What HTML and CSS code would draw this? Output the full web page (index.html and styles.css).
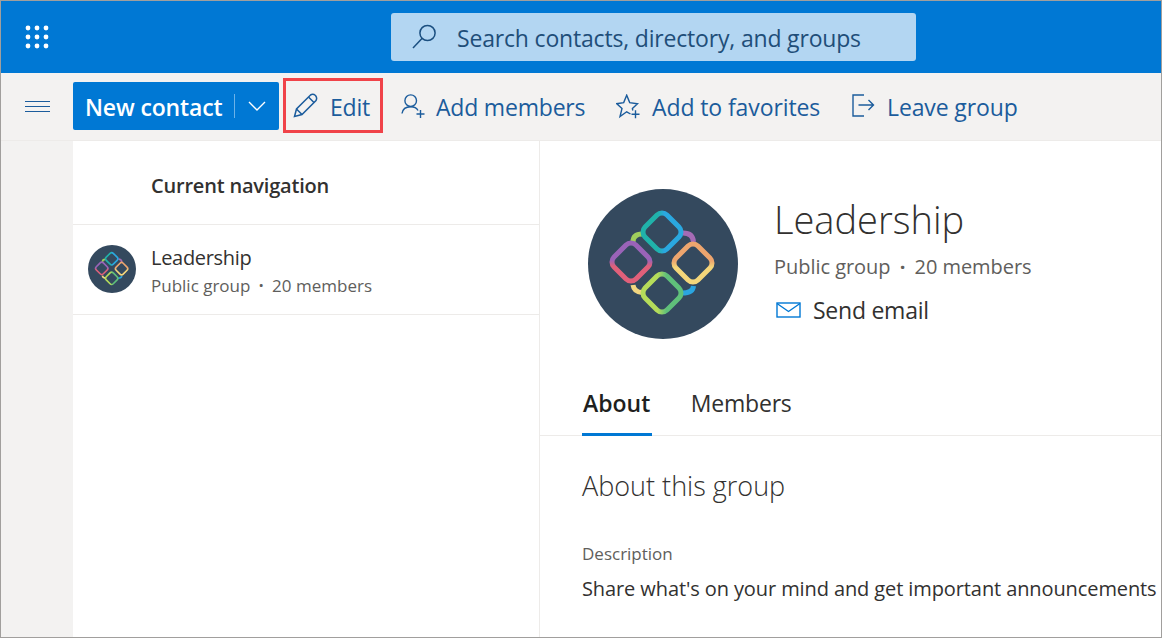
FILE: index.html
```html
<!DOCTYPE html>
<html>
<head>
  <meta charset="UTF-8"/>
  <title>Leadership - Contacts</title>
  <link rel="stylesheet" href="styles.css">
</head>
<body>
<div class="app">
  <header class="topbar">
    <div class="waffle">
      <svg width="24" height="24" viewBox="0 0 24 24" fill="#fff">
        <circle cx="3" cy="3" r="2.4"/><circle cx="12" cy="3" r="2.4"/><circle cx="21" cy="3" r="2.4"/>
        <circle cx="3" cy="12" r="2.4"/><circle cx="12" cy="12" r="2.4"/><circle cx="21" cy="12" r="2.4"/>
        <circle cx="3" cy="21" r="2.4"/><circle cx="12" cy="21" r="2.4"/><circle cx="21" cy="21" r="2.4"/>
      </svg>
    </div>
    <div class="search">
      <svg class="search-icon" width="26" height="26" viewBox="0 0 26 26" fill="none" stroke="#1b4f80" stroke-width="1.5">
        <circle cx="15.5" cy="9" r="7.6"/><path d="M10.2 14.3 L1 24"/>
      </svg>
      <span>Search contacts, directory, and groups</span>
    </div>
  </header>

  <div class="toolbar">
    <div class="hamburger"><i></i><i></i><i></i></div>
    <div class="new-btn">
      <span class="new-label">New contact</span>
      <span class="new-sep"></span>
      <svg width="18" height="10" viewBox="0 0 18 10" fill="none" stroke="#fff" stroke-width="1.4"><path d="M1 1 L9 9 L17 1"/></svg>
    </div>
    <div class="tool tool-edit">
      <svg width="25" height="25" viewBox="0 0 25 25" fill="none" stroke="#1b5c9c" stroke-width="1.5">
        <path d="M1.5 23.5 L3.5 16 L17.5 2 Q20 0.5 22.5 2.5 Q24.5 5 23 7.5 L9 21.5 Z"/><path d="M15.5 4 L21 9.5"/><path d="M3.5 16 L9 21.5"/>
      </svg>
      <span>Edit</span>
    </div>
    <div class="tool tool-members">
      <svg width="25" height="25" viewBox="0 0 25 25" fill="none" stroke="#1b5c9c" stroke-width="1.4">
        <circle cx="9.7" cy="6.7" r="5.8"/><path d="M1 19.5 Q2 12.8 9.7 12.8 Q15 12.8 17 16.5"/><path d="M15.5 20 H23.5 M19.5 16 V24"/>
      </svg>
      <span>Add members</span>
    </div>
    <div class="tool tool-fav">
      <svg width="25" height="25" viewBox="0 0 25 25" fill="none" stroke="#1b5c9c" stroke-width="1.4">
        <path d="M16.8 16.5 L16.4 14.5 L21.5 9.7 L13.7 8.6 L10.7 1.2 L7.7 8.6 L0.8 9.7 L6 14.5 L4 22.5 L10.7 17.8 L14.5 20"/><path d="M15.5 20.3 H23.5 M19.5 16.3 V24.3"/>
      </svg>
      <span>Add to favorites</span>
    </div>
    <div class="tool tool-leave">
      <svg width="25" height="25" viewBox="0 0 25 25" fill="none" stroke="#1b5c9c" stroke-width="1.4">
        <path d="M13 1 H2 V22 H13"/><path d="M7.5 11 H22.5 M17.5 6 L22.5 11 L17.5 16"/>
      </svg>
      <span>Leave group</span>
    </div>
  </div>

  <div class="content">
    <div class="rail"></div>
    <nav class="nav">
      <div class="nav-head">Current navigation</div>
      <div class="nav-item">
        <svg class="logo" width="48" height="48"><use href="#group-logo"/></svg>
        <div class="nav-text">
          <div class="nav-name">Leadership</div>
          <div class="nav-sub">Public group <b>·</b> 20 members</div>
        </div>
      </div>
    </nav>
    <main class="main">
      <section class="profile">
        <svg class="logo" width="150" height="150"><use href="#group-logo"/></svg>
        <div class="profile-info">
          <h1>Leadership</h1>
          <div class="profile-sub">Public group <b>·</b> 20 members</div>
          <div class="send">
            <svg width="25" height="16" viewBox="0 0 25 16" fill="none" stroke="#0078d4" stroke-width="1.4">
              <rect x="1" y="1" width="23" height="14"/><path d="M1 1.5 L12.5 9.5 L24 1.5"/>
            </svg>
            <span>Send email</span>
          </div>
        </div>
      </section>
      <div class="tabs">
        <div class="tab tab-on">About</div>
        <div class="tab">Members</div>
      </div>
      <section class="about">
        <h2>About this group</h2>
        <div class="desc-label">Description</div>
        <div class="desc">Share what's on your mind and get important announcements</div>
      </section>
    </main>
  </div>
</div>

<svg class="defs" width="0" height="0">
  <defs>
    <linearGradient id="ring-top" x1="1" y1="0" x2="0" y2="1">
      <stop offset="0.45" stop-color="#2aa8e0"/><stop offset="0.6" stop-color="#20b2aa"/>
    </linearGradient>
    <linearGradient id="ring-left" x1="0" y1="0" x2="1" y2="1">
      <stop offset="0.45" stop-color="#9a63b8"/><stop offset="0.6" stop-color="#e0607a"/>
    </linearGradient>
    <linearGradient id="ring-right" x1="0" y1="0" x2="1" y2="1">
      <stop offset="0.45" stop-color="#eda56e"/><stop offset="0.6" stop-color="#f4d67a"/>
    </linearGradient>
    <linearGradient id="ring-bottom" x1="1" y1="0" x2="0" y2="1">
      <stop offset="0.4" stop-color="#5fc07a"/><stop offset="0.6" stop-color="#b5dc5a"/>
    </linearGradient>
  </defs>
  <symbol id="group-logo" viewBox="0 0 150 150">
    <circle cx="75" cy="75" r="75" fill="#34495e"/>
    <g fill="none" stroke-width="5">
      <path d="M45 53 Q45 45 54 45" stroke="#9fce5c"/>
      <path d="M95 44 Q105 44 105.5 53" stroke="#a56bb5"/>
      <path d="M105.5 97 Q105 104 94 104" stroke="#2aa5e0"/>
      <path d="M45 96 Q46 103 54 103.5" stroke="#f2d680"/>
      <rect x="-15.5" y="-15.5" width="31" height="31" rx="7" transform="translate(74 43) rotate(45)" stroke="url(#ring-top)"/>
      <rect x="-15.5" y="-15.5" width="31" height="31" rx="7" transform="translate(43 73) rotate(45)" stroke="url(#ring-left)"/>
      <rect x="-15.5" y="-15.5" width="31" height="31" rx="7" transform="translate(105 74) rotate(45)" stroke="url(#ring-right)"/>
      <rect x="-15.5" y="-15.5" width="31" height="31" rx="7" transform="translate(74 104) rotate(45)" stroke="url(#ring-bottom)"/>
    </g>
  </symbol>
</svg>
</body>
</html>
```

FILE: styles.css
```css
* { margin: 0; padding: 0; box-sizing: border-box; }

html, body { height: 100%; overflow: hidden; }

body { font-family: "Open Sans", "Noto Sans", "Liberation Sans", sans-serif; color: #323130; background: #fff; }

.defs { position: absolute; }

.app { height: 638px; display: flex; flex-direction: column; border: 1px solid #a19f9d; }

/* ==========top bar========== */
.topbar { height: 72px; flex: none; background: #0078d4; display: flex; align-items: center; }
.waffle { width: 390px; padding-left: 24px; display: flex; }
.search { width: 525px; height: 48px; background: #b3d6f2; border-radius: 3px; display: flex; align-items: center; padding-left: 21px; gap: 19px; color: #1f4e79; font-size: 23px; letter-spacing: -0.18px; white-space: nowrap; }
.search span { padding-top: 1px; }

/* ==========toolbar========== */
.toolbar { height: 68px; flex: none; background: #f3f2f1; display: flex; align-items: center; border-bottom: 1px solid #edebe9; padding-bottom: 1px; }
.hamburger { width: 72px; padding-left: 24px; display: flex; flex-direction: column; gap: 4px; }
.hamburger i { display: block; width: 25px; height: 1px; background: #1b5c9c; }

.new-btn { width: 206px; height: 48px; background: #0078d4; color: #fff; border-radius: 2px; display: flex; align-items: center; padding-left: 12px; }
.new-label { font-size: 23px; font-weight: 600; letter-spacing: -0.15px; width: 149px; white-space: nowrap; padding-top: 1px; }
.new-sep { width: 1px; height: 24px; background: #6cb2e8; margin-right: 13px; }

.tool { display: flex; align-items: center; color: #1b5c9c; font-size: 23px; letter-spacing: -0.2px; white-space: nowrap; }
.tool span { padding-top: 2px; }
.tool-edit { width: 100px; height: 55px; margin: 0 0 1px 4px; border: 3px solid #f04349; padding-left: 7px; gap: 12px; }
.tool-members { margin-left: 18px; gap: 10px; width: 215px; }
.tool-fav { gap: 11px; width: 235px; letter-spacing: -0.1px; }
.tool-leave { gap: 11px; letter-spacing: -0.12px; }

/* ==========content========== */
.content { flex: 1; display: flex; min-height: 0; }
.rail { width: 72px; flex: none; background: #f3f2f1; }
.nav { width: 467px; flex: none; border-right: 1px solid #edebe9; }
.nav-head { height: 84px; padding-top: 31px; padding-left: 78px; font-size: 20px; font-weight: 600; letter-spacing: -0.2px; line-height: 28px; border-bottom: 1px solid #edebe9; }
.nav-item { height: 90px; display: flex; align-items: flex-start; gap: 15px; padding: 20px 0 0 15px; border-bottom: 1px solid #edebe9; }
.nav-text { margin-top: -1px; }
.nav-name { font-size: 20px; line-height: 28px; letter-spacing: -0.3px; }
.nav-sub { font-size: 17px; line-height: 28px; color: #605e5c; }
.nav-sub b { margin: 0 4px; font-weight: 700; }

.main { flex: 1; min-width: 0; overflow: hidden; }
.profile { display: flex; padding: 48px 0 0 48px; height: 228px; }
.profile-info { padding-left: 36px; }
.profile h1 { font-size: 38px; font-weight: 300; line-height: 58px; margin-top: 1px; }
.profile-sub { font-size: 20px; line-height: 30px; margin-top: 4px; color: #605e5c; letter-spacing: -0.04px; }
.profile-sub b { margin: 0 4px; }
.send { display: flex; align-items: center; gap: 12px; font-size: 23px; letter-spacing: -0.25px; margin-top: 13px; line-height: 30px; padding-left: 2px; }

.tabs { display: flex; gap: 39px; padding-left: 42px; height: 67px; border-bottom: 1px solid #edebe9; }
.tab { font-size: 23px; line-height: 68px; letter-spacing: -0.2px; height: 67px; }
.tab-on { font-weight: 600; color: #201f1e; border-bottom: 3px solid #0078d4; padding: 0 1.5px 0 1px; letter-spacing: 0; }

.about { padding: 30px 0 0 42px; white-space: nowrap; }
.about h2 { font-size: 27px; font-weight: 300; line-height: 40px; }
.desc-label { font-size: 17px; color: #605e5c; line-height: 24px; margin-top: 36px; }
.desc { font-size: 20px; line-height: 30px; margin-top: 8px; letter-spacing: -0.1px; }
```
